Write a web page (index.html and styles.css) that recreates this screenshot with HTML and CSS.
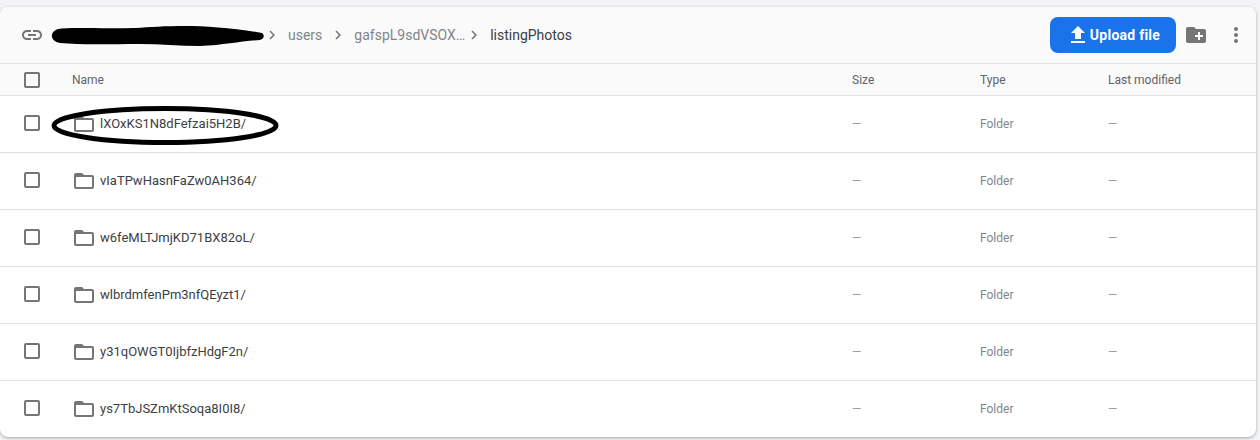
FILE: index.html
```html
<!DOCTYPE html>
<html lang="en">
<head>
<meta charset="utf-8">
<title>Storage</title>
<link rel="stylesheet" href="styles.css">
</head>
<body>
<svg width="0" height="0" class="defs">
  <symbol id="folder" viewBox="0 0 24 24"><path fill="currentColor" d="M20 6h-8l-2-2H4c-1.100 0-2 .9-2 2v12c0 1.100.9 2 2 2h16c1.100 0 2-.9 2-2V8c0-1.100-.9-2-2-2zm0 12H4V8h16v10z"/></symbol>
  <symbol id="chev" viewBox="0 0 24 24"><path fill="currentColor" d="M10 6 8.590 7.410 13.170 12l-4.580 4.590L10 18l6-6z"/></symbol>
</svg>
<main class="card">
  <div class="toolbar">
    <svg class="link" viewBox="0 0 24 24"><path fill="currentColor" d="M3.900 12c0-1.710 1.390-3.100 3.100-3.100h4V7H7c-2.760 0-5 2.240-5 5s2.240 5 5 5h4v-1.900H7c-1.710 0-3.100-1.390-3.100-3.100zM8 13h8v-2H8v2zm9-6h-4v1.900h4c1.710 0 3.100 1.390 3.100 3.100s-1.390 3.100-3.100 3.100h-4V17h4c2.760 0 5-2.240 5-5s-2.240-5-5-5z"/></svg>
    <nav class="crumbs">
      <span class="crumb-redacted"></span>
      <svg class="chev"><use href="#chev"/></svg>
      <span class="crumb c-users">users</span>
      <svg class="chev"><use href="#chev"/></svg>
      <span class="crumb c-id">gafspL9sdVSOX…</span>
      <svg class="chev c-tight"><use href="#chev"/></svg>
      <span class="crumb current">listingPhotos</span>
    </nav>
    <button class="upload">
      <svg viewBox="0 0 24 24"><path fill="currentColor" d="M9 16h6v-6h4l-7-7-7 7h4v6zm-4 2h14v2H5v-2z"/></svg>
      Upload file
    </button>
    <svg class="newfolder" viewBox="0 0 24 24"><path fill="currentColor" d="M20 6h-8l-2-2H4c-1.110 0-2 .89-2 2v12c0 1.110.89 2 2 2h16c1.110 0 2-.89 2-2V8c0-1.110-.89-2-2-2zm-1 8h-3v3h-2v-3h-3v-2h3V9h2v3h3v2z"/></svg>
    <svg class="more" viewBox="0 0 24 24"><path fill="currentColor" d="M12 8c1.100 0 2-.9 2-2s-.9-2-2-2-2 .9-2 2 .9 2 2 2zm0 2c-1.100 0-2 .9-2 2s.9 2 2 2 2-.9 2-2-.9-2-2-2zm0 6c-1.100 0-2 .9-2 2s.9 2 2 2 2-.9 2-2-.9-2-2-2z"/></svg>
  </div>

  <div class="row head">
    <span class="check"></span>
    <span class="name">Name</span>
    <span class="size">Size</span>
    <span class="type">Type</span>
    <span class="mod">Last modified</span>
  </div>

  <div class="row">
    <span class="check"></span>
    <span class="name"><svg class="folder"><use href="#folder"/></svg>lXOxKS1N8dFefzai5H2B/</span>
    <span class="size dash">—</span><span class="type">Folder</span><span class="mod dash">—</span>
  </div>
  <div class="row">
    <span class="check"></span>
    <span class="name"><svg class="folder"><use href="#folder"/></svg>vIaTPwHasnFaZw0AH364/</span>
    <span class="size dash">—</span><span class="type">Folder</span><span class="mod dash">—</span>
  </div>
  <div class="row">
    <span class="check"></span>
    <span class="name"><svg class="folder"><use href="#folder"/></svg>w6feMLTJmjKD71BX82oL/</span>
    <span class="size dash">—</span><span class="type">Folder</span><span class="mod dash">—</span>
  </div>
  <div class="row">
    <span class="check"></span>
    <span class="name"><svg class="folder"><use href="#folder"/></svg>wlbrdmfenPm3nfQEyzt1/</span>
    <span class="size dash">—</span><span class="type">Folder</span><span class="mod dash">—</span>
  </div>
  <div class="row">
    <span class="check"></span>
    <span class="name"><svg class="folder"><use href="#folder"/></svg>y31qOWGT0IjbfzHdgF2n/</span>
    <span class="size dash">—</span><span class="type">Folder</span><span class="mod dash">—</span>
  </div>
  <div class="row last">
    <span class="check"></span>
    <span class="name"><svg class="folder"><use href="#folder"/></svg>ys7TbJSZmKtSoqa8I0I8/</span>
    <span class="size dash">—</span><span class="type">Folder</span><span class="mod dash">—</span>
  </div>

  <svg class="scribble" viewBox="0 0 1260 440" width="1260" height="440">
    <path fill="#000" d="M58 29 C70 27 100 29 135 28 C150 27 165 26 185 26 C205 26 235 28 262 33 C265 35 264 39 260 40 C240 41 225 45 200 46 C180 46 160 44 140 44 C110 44 80 45 60 43 C50 41 49 32 58 29 Z"/>
    <ellipse cx="165" cy="125.500" rx="111" ry="17" fill="none" stroke="#000" stroke-width="5"/>
  </svg>
</main>
</body>
</html>
```
FILE: styles.css
```css
* { box-sizing: border-box; }
html, body { margin: 0; height: 100%; }
body {
  background: #f1f3f4;
  font-family: Roboto, "Liberation Sans", sans-serif;
  overflow: hidden;
  padding: 7px 4px 0 0;
}
.defs { position: absolute; }
.card {
  position: relative;
  height: 430px;
  background: #fff;
  border-radius: 8px;
  box-shadow: 0 1px 3px rgba(60, 64, 67, .45);
}
.toolbar {
  height: 57px;
  display: flex;
  align-items: center;
  background: #fafafa;
  border-bottom: 1px solid #e0e0e0;
  border-radius: 8px 8px 0 0;
  padding: 0 8px 0 20px;
}
.link { width: 24px; height: 24px; color: #757575; flex: none; }
.crumbs {
  display: flex;
  align-items: center;
  flex: 1;
  font-size: 14px;
  color: #80868b;
  margin-left: 8px;
}
.crumb-redacted { width: 212px; }
.chev { width: 18px; height: 18px; color: #757575; flex: none; margin: 0 0 0 -1px; }
.crumb { white-space: nowrap; }
.c-users { margin: 0 8px 0 7px; }
.c-id { margin: 0 1px 0 7px; }
.c-tight { margin-right: 7px; }
.current { color: #3c4043; }
.upload {
  display: flex;
  align-items: center;
  justify-content: center;
  width: 126px;
  height: 36px;
  border: 0;
  border-radius: 8px;
  background: #1a73e8;
  color: #fff;
  font: 700 14px Roboto, "Liberation Sans", sans-serif;
  letter-spacing: .25px;
  padding: 0;
}
.upload svg { width: 24px; height: 24px; }
.newfolder { width: 24px; height: 24px; color: #757575; margin-left: 8px; flex: none; }
.more { width: 24px; height: 24px; color: #757575; margin-left: 16px; flex: none; }
.row {
  height: 57px;
  display: grid;
  grid-template-columns: 72px 780px 128px 128px 1fr;
  align-items: center;
  border-bottom: 1px solid #e0e0e0;
  font-size: 12px;
  color: #80868b;
}
.head {
  height: 32px;
  background: #fafafa;
}
.last { height: 56px; border-bottom: 0; border-radius: 0 0 8px 8px; }
.check {
  width: 16px;
  height: 16px;
  margin: 0 0 2px 24px;
  border: 2px solid #757575;
  border-radius: 2px;
}
.name {
  display: flex;
  align-items: center;
  margin-bottom: 2px;
  color: #3c4043;
  font-size: 13px;
}
.head .check, .head .name { margin-bottom: 0; }
.head .name, .head .size, .head .type, .head .mod { font-size: 12px; color: #5f6368; }
.folder { width: 24px; height: 24px; color: #757575; margin: 2px 4px 0 0; flex: none; }
.dash { color: #9aa0a6; }
.scribble {
  position: absolute;
  left: 0;
  top: -7px;
  pointer-events: none;
}
```
